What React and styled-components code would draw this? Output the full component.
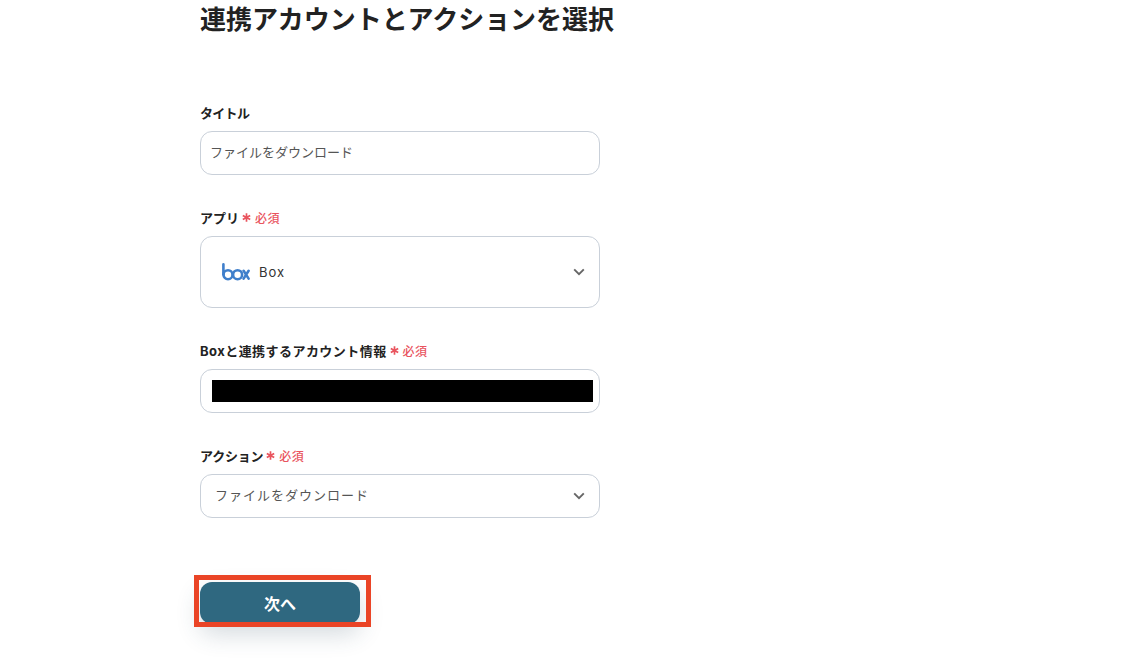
import React from "react";
import styled, { createGlobalStyle } from "styled-components";

const GlobalStyle = createGlobalStyle`
  html, body {
    margin: 0;
    padding: 0;
    background: #fff;
    overflow: hidden;
  }
  body {
    font-family: "Inter", "Noto Sans CJK JP", sans-serif;
    color: #222;
  }
`;

const Page = styled.div`
  width: 400px;
  height: 668px;
  margin-left: 200px;
  display: flex;
  flex-direction: column;
`;

const Title = styled.h1`
  margin: 0 0 63px;
  width: 440px;
  font-size: 26px;
  line-height: 40px;
  font-weight: 700;
  letter-spacing: -0.05px;
  color: #222;
  white-space: nowrap;
`;

const Form = styled.div`
  display: flex;
  flex-direction: column;
  gap: 33px;
`;

const Field = styled.div`
  display: flex;
  flex-direction: column;
  gap: 8px;
`;

const Label = styled.div`
  display: flex;
  align-items: center;
  height: 18px;
  padding-bottom: 2px;
  font-size: 13px;
  font-weight: 700;
  color: #222;
  letter-spacing: ${({ $track }) => $track || 0}px;
`;

const Required = styled.span`
  display: inline-flex;
  align-items: center;
  margin-left: 3px;
  font-size: 12px;
  font-weight: 500;
  color: #e9545e;
  letter-spacing: 0.5px;
`;

const Star = styled.span`
  width: 9px;
  margin-right: 4px;
  display: inline-flex;
`;

const Box = styled.div`
  box-sizing: border-box;
  display: flex;
  align-items: center;
  height: ${({ $tall }) => ($tall ? "72px" : "44px")};
  padding-left: ${({ $inset }) => $inset}px;
  padding-right: ${({ $right }) => $right || 0}px;
  border: 1px solid #c9d0d9;
  border-radius: 12px;
  background: #fff;
  font-size: 13px;
  color: ${({ $tall }) => ($tall ? "#333" : "#555")};
`;

const BoxText = styled.span`
  flex: 1;
  padding-bottom: ${({ $lift }) => $lift || 0}px;
  letter-spacing: ${({ $track }) => $track || 0}px;
`;

const Redacted = styled.div`
  width: 381px;
  height: 22px;
  background: #000;
`;

const LogoWrap = styled.span`
  display: inline-flex;
  margin-right: 9px;
`;

const ButtonWrap = styled.div`
  position: relative;
  width: 160px;
  margin-top: 64px;
`;

const NextButton = styled.button`
  display: block;
  width: 160px;
  height: 42px;
  border: 0;
  border-radius: 12px;
  background: #2f6880;
  color: #fff;
  font-family: inherit;
  font-size: 16px;
  font-weight: 700;
  box-shadow: 0 10px 24px rgba(40, 70, 90, 0.2);
`;

const Highlight = styled.div`
  position: absolute;
  left: -6px;
  top: -7px;
  width: 177px;
  height: 52px;
  box-sizing: border-box;
  border: 5.5px solid #ea4426;
  pointer-events: none;
`;

const Chevron = () => (
  <svg width="12" height="8" viewBox="0 0 12 8" fill="none">
    <path d="M1.2 1.4 6 6.2l4.8-4.8" stroke="#666" strokeWidth="1.9" />
  </svg>
);

const Asterisk = () => (
  <Star>
    <svg width="9" height="9" viewBox="0 0 9 9" fill="none">
      <path d="M4.5 0.3v8.4M.8 2.4l7.4 4.2M8.2 2.4.8 6.6" stroke="#e9545e" strokeWidth="1.7" />
    </svg>
  </Star>
);

const BoxLogo = () => (
  <LogoWrap>
    <svg width="28" height="18" viewBox="0 0 28 18" fill="none">
      <g stroke="#3f7fcb" strokeWidth="2.6" strokeLinecap="round">
        <path d="M1.4 1.4v10" />
        <circle cx="6" cy="11.7" r="4.5" />
        <circle cx="15.6" cy="11.7" r="4.5" />
        <path d="M21.6 7.8l5 7.8M26.6 7.8l-5 7.8" />
      </g>
    </svg>
  </LogoWrap>
);

const RequiredMark = () => (
  <Required>
    <Asterisk />
    必須
  </Required>
);

export default function App() {
  return (
    <>
      <GlobalStyle />
      <Page>
        <Title>連携アカウントとアクションを選択</Title>
        <Form>
          <Field>
            <Label $track={-0.7}>タイトル</Label>
            <Box $inset={9}>
              <BoxText $lift={4}>ファイルをダウンロード</BoxText>
            </Box>
          </Field>
          <Field>
            <Label>
              アプリ
              <RequiredMark />
            </Label>
            <Box $tall $inset={21} $right={14}>
              <BoxLogo />
              <BoxText $track={1}>Box</BoxText>
              <Chevron />
            </Box>
          </Field>
          <Field>
            <Label $track={0.45}>
              Boxと連携するアカウント情報
              <RequiredMark />
            </Label>
            <Box $inset={11}>
              <Redacted />
            </Box>
          </Field>
          <Field>
            <Label $track={-0.2}>
              アクション
              <RequiredMark />
            </Label>
            <Box $inset={14} $right={14}>
              <BoxText $track={1} $lift={4}>ファイルをダウンロード</BoxText>
              <Chevron />
            </Box>
          </Field>
        </Form>
        <ButtonWrap>
          <NextButton>次へ</NextButton>
          <Highlight />
        </ButtonWrap>
      </Page>
    </>
  );
}
